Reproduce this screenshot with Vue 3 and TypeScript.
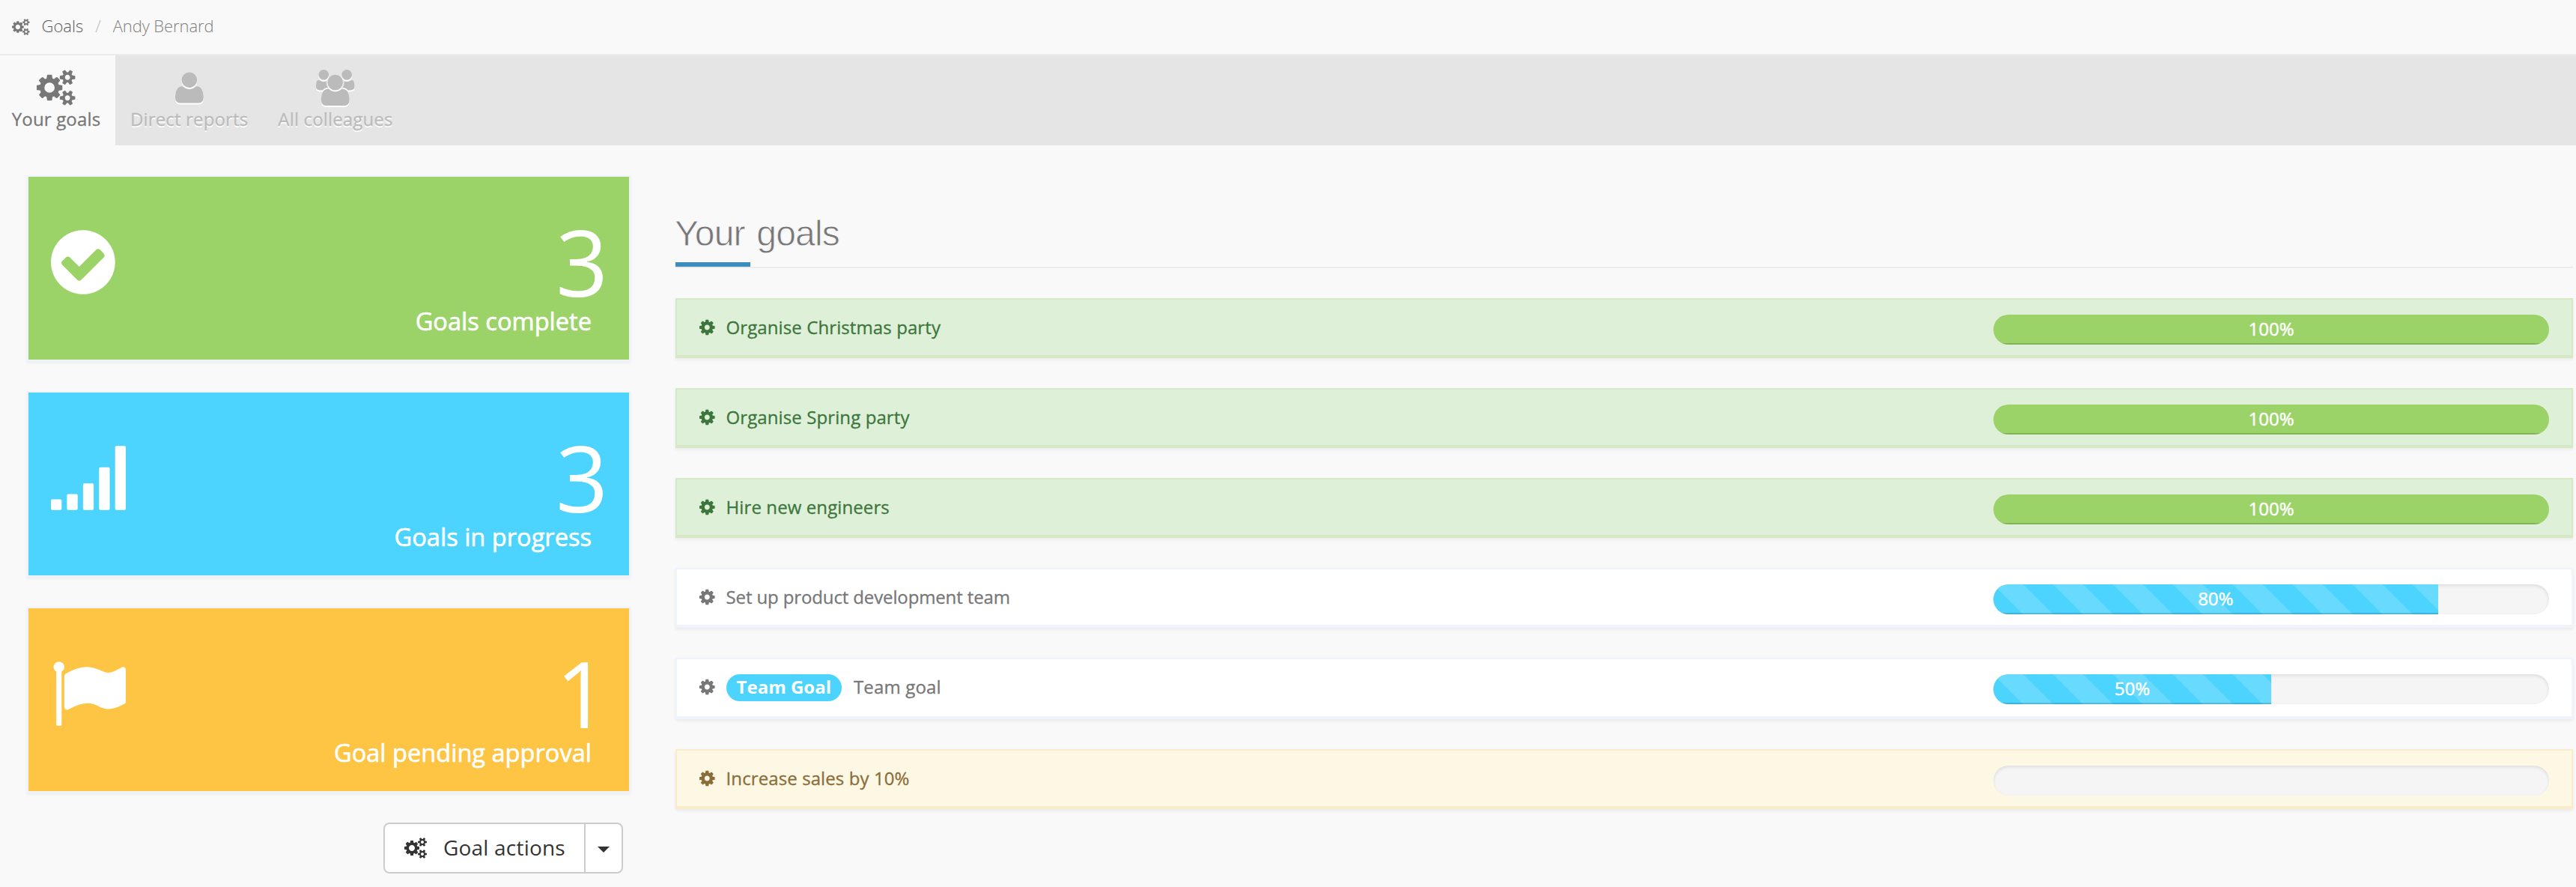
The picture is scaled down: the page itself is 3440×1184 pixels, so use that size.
<script setup lang="ts">
interface Tab {
  label: string
  icon: string
  active?: boolean
}
interface Card {
  count: number
  label: string
  tone: string
  icon: string
}
interface Goal {
  name: string
  tone: 'done' | 'open' | 'pending'
  progress: number
  badge?: string
}
interface Glyph {
  box: string
  width: number
  d: string
}

// All glyphs share an 1792-unit em; width is the advance in the same units.
const groupHead =
  'M1408 640q0 159-112.5 271.5t-271.5 112.5-271.5-112.5-112.5-271.5 112.5-271.5 271.5-112.5 271.5 112.5 112.5 271.5z'
const groupBody =
  'M1728 1533q0 120-73 189.5t-194 69.5h-874q-121 0-194-69.5t-73-189.5q0-53 3.5-103.5t14-109 26.5-108.5 43-97.5 62-81 85.5-53.5 111.5-20q10 0 43 21.5t73 48 107 48 135 21.5 135-21.5 107-48 73-48 43-21.5q61 0 111.5 20t85.5 53.5 62 81 43 97.5 26.5 108.5 14 109 3.5 103.5z'
const smallCog =
  'v140q0 16-149 31-12 27-30 52 51 113 51 138 0 4-4 7-122 71-124 71-8 0-46-47t-52-68q-20 2-30 2t-30-2q-14 21-52 68t-46 47q-2 0-124-71-4-3-4-7 0-25 51-138-18-25-30-52-149-15-149-31v-140q0-16 149-31 13-29 30-52-51-113-51-138 0-4 4-7 4-2 35-20t59-34 30-16q8 0 46 46.5t52 67.5q20-2 30-2t30 2q51-71 92-112l6-2q4 0 124 70 4 3 4 7 0 25-51 138 17 23 30 52 149 15 149 31z'

const glyphs: Record<string, Glyph> = {
  cog: {
    box: '128 0 1536 1792',
    width: 1536,
    d: 'M1152 896q0-106-75-181t-181-75-181 75-75 181 75 181 181 75 181-75 75-181zm512-109v222q0 12-8 23t-20 13l-185 28q-19 54-39 91 35 50 107 138 10 12 10 25t-9 23q-27 37-99 108t-94 71q-12 0-26-9l-138-108q-44 23-91 38-16 136-29 186-7 28-36 28h-222q-14 0-24.5-8.5t-11.5-21.5l-28-184q-49-16-90-37l-141 107q-10 9-25 9-14 0-25-11-126-114-165-168-7-10-7-23 0-12 8-23 15-21 51-66.5t54-70.5q-27-50-41-99l-183-27q-13-2-21-12.5t-8-23.5v-222q0-12 8-23t19-13l186-28q14-46 39-92-40-57-107-138-10-12-10-24 0-10 9-23 26-36 98.5-107.5t94.5-71.5q13 0 26 10l138 107q44-23 91-38 16-136 29-186 7-28 36-28h222q14 0 24.5 8.5t11.5 21.5l28 184q49 16 90 37l142-107q9-9 24-9 13 0 25 10 129 119 165 170 7 8 7 22 0 12-8 23-15 21-51 66.5t-54 70.5q26 50 41 98l183 28q13 2 21 12.5t8 23.5z',
  },
  cogs: {
    box: '-64 0 1920 1792',
    width: 1920,
    d:
      'M832 896q0-106-75-181t-181-75-181 75-75 181 75 181 181 75 181-75 75-181zm768 512q0-52-38-90t-90-38-90 38-38 90q0 53 37.5 90.5t90.5 37.5 90.5-37.5 37.5-90.5zm0-1024q0-52-38-90t-90-38-90 38-38 90q0 53 37.5 90.5t90.5 37.5 90.5-37.5 37.5-90.5zm-384 421v185q0 10-7 19.5t-16 10.5l-155 24q-11 35-32 76 34 48 90 115 7 11 7 20 0 12-7 19-23 30-82.5 89.5t-78.5 59.5q-11 0-21-7l-115-90q-37 19-77 31-11 108-23 155-7 24-30 24h-186q-11 0-20-7.5t-10-17.5l-23-153q-34-10-75-31l-118 89q-7 7-20 7-11 0-21-8-144-133-144-160 0-9 7-19 10-14 41-53t47-61q-23-44-35-82l-152-24q-10-1-17-9.5t-7-19.5v-185q0-10 7-19.5t16-10.5l155-24q11-35 32-76-34-48-90-115-7-11-7-20 0-12 7-20 22-30 82-89t79-59q11 0 21 7l115 90q34-18 77-32 11-108 23-154 7-24 30-24h186q11 0 20 7.5t10 17.5l23 153q34 10 75 31l118-89q8-7 20-7 11 0 21 8 144 133 144 160 0 8-7 19-12 16-42 54t-45 60q23 48 34 82l152 23q10 2 17 10.5t7 19.5z' +
      'M1856 1338' + smallCog + 'M1856 314' + smallCog,
  },
  user: { box: '320 128 1408 1792', width: 1408, d: groupHead + groupBody },
  users: {
    box: '64 0 1920 1792',
    width: 1920,
    d:
      'M657 896q-162 5-265 128h-134q-82 0-138-40.5t-56-118.5q0-353 124-353 6 0 43.5 21t97.5 42.5 119 21.5q67 0 133-23-5 37-5 66 0 139 81 256z' +
      'M704 256q0 106-75 181t-181 75-181-75-75-181 75-181 181-75 181 75 75 181z' +
      'M1984 865q0 78-56 118.5t-138 40.5h-134q-103-123-265-128 81-117 81-256 0-29-5-66 66 23 133 23 59 0 119-21.5t97.5-42.5 43.5-21q124 0 124 353z' +
      'M1856 256q0 106-75 181t-181 75-181-75-75-181 75-181 181-75 181 75 75 181z' +
      groupHead + groupBody,
  },
  check: {
    box: '128 0 1536 1792',
    width: 1536,
    d: 'M1412 734q0-28-18-46l-91-90q-19-19-45-19t-45 19l-408 407-226-226q-19-19-45-19t-45 19l-91 90q-18 18-18 46 0 27 18 45l362 362q19 19 45 19 27 0 46-19l543-543q18-18 18-45zm252 162q0 209-103 385.5t-279.5 279.5-385.5 103-385.5-103-279.5-279.5-103-385.5 103-385.5 279.5-279.5 385.5-103 385.5 103 279.5 279.5 103 385.5z',
  },
  signal: {
    box: '0 0 1792 1792',
    width: 1792,
    d: [256, 384, 640, 1024, 1536]
      .map((h, i) => `M${i * 384 + 32} 1664q-32 0-32-32v-${h - 64}q0-32 32-32h192q32 0 32 32v${h - 64}q0 32-32 32z`)
      .join(''),
  },
  flag: {
    box: '-64 0 1792 1792',
    width: 1792,
    d: 'M256 256q0 72-64 110v1266q0 13-9.5 22.5t-22.5 9.5h-64q-13 0-22.5-9.5t-9.5-22.5v-1266q-64-38-64-110 0-53 37.5-90.5t90.5-37.5 90.5 37.5 37.5 90.5zm1472 64v763q0 25-12.5 38.5t-39.5 27.5q-215 116-369 116-61 0-123.5-22t-108.5-48-115.5-48-142.5-22q-192 0-464 146-17 9-33 9-26 0-45-19t-19-45v-742q0-32 31-55 21-14 79-43 236-120 421-120 107 0 200 29t219 88q38 19 88 19 54 0 117.5-21t110-47 88-47 54.5-21q26 0 45 19t19 45z',
  },
}

const tabs: Tab[] = [
  { label: 'Your goals', icon: 'cogs', active: true },
  { label: 'Direct reports', icon: 'user' },
  { label: 'All colleagues', icon: 'users' },
]
const cards: Card[] = [
  { count: 3, label: 'Goals complete', tone: 'green', icon: 'check' },
  { count: 3, label: 'Goals in progress', tone: 'blue', icon: 'signal' },
  { count: 1, label: 'Goal pending approval', tone: 'amber', icon: 'flag' },
]
const goals: Goal[] = [
  { name: 'Organise Christmas party', tone: 'done', progress: 100 },
  { name: 'Organise Spring party', tone: 'done', progress: 100 },
  { name: 'Hire new engineers', tone: 'done', progress: 100 },
  { name: 'Set up product development team', tone: 'open', progress: 80 },
  { name: 'Team goal', tone: 'open', progress: 50, badge: 'Team Goal' },
  { name: 'Increase sales by 10%', tone: 'pending', progress: 0 },
]
</script>

<template>
  <div class="page">
    <nav class="crumbs">
      <svg class="icon crumb-icon" :viewBox="glyphs.cogs.box"><path :d="glyphs.cogs.d" /></svg>
      <a class="crumb-link">Goals</a>
      <span class="crumb-sep">/</span>
      <span class="crumb-here">Andy Bernard</span>
    </nav>

    <div class="tabs">
      <a v-for="tab in tabs" :key="tab.label" class="tab" :class="{ active: tab.active }">
        <svg class="icon tab-icon" :viewBox="glyphs[tab.icon].box"><path :d="glyphs[tab.icon].d" /></svg>
        <span class="tab-label">{{ tab.label }}</span>
      </a>
    </div>

    <div class="content">
      <aside class="side">
        <div v-for="card in cards" :key="card.label" class="card" :class="card.tone">
          <svg class="icon card-icon" :viewBox="glyphs[card.icon].box"><path :d="glyphs[card.icon].d" /></svg>
          <div class="card-text">
            <div class="card-count">{{ card.count }}</div>
            <div class="card-label">{{ card.label }}</div>
          </div>
        </div>
        <div class="actions">
          <button class="btn btn-main">
            <svg class="icon btn-icon" :viewBox="glyphs.cogs.box"><path :d="glyphs.cogs.d" /></svg>
            <span class="btn-text">Goal actions</span>
          </button>
          <button class="btn btn-caret"><span class="caret"></span></button>
        </div>
      </aside>

      <main class="main">
        <header class="title">
          <h1>Your goals</h1>
          <div class="accent"></div>
        </header>
        <div v-for="goal in goals" :key="goal.name" class="goal" :class="[goal.tone, { tall: goal.badge }]">
          <svg class="icon goal-icon" :viewBox="glyphs.cog.box"><path :d="glyphs.cog.d" /></svg>
          <span v-if="goal.badge" class="badge">{{ goal.badge }}</span>
          <span class="goal-name">{{ goal.name }}</span>
          <div class="track">
            <div v-if="goal.progress" class="fill" :style="{ width: goal.progress + '%' }">{{ goal.progress }}%</div>
          </div>
        </div>
      </main>
    </div>
  </div>
</template>

<style>
body {
  margin: 0;
  background: #f9f9f9;
}
</style>

<style scoped>
.page {
  height: 1184px;
  overflow: hidden;
  background: #f9f9f9;
  color: #777;
  font-family: "Open Sans", "Noto Sans", sans-serif;
  font-size: 24px;
}
.icon {
  display: block;
  flex: none;
  width: auto;
  fill: currentColor;
}

.crumbs {
  box-sizing: border-box;
  display: flex;
  height: 74px;
  padding-left: 16px;
  border-bottom: 2px solid #ebebeb;
  font-size: 22px;
  font-weight: 300;
  line-height: 69px;
}
.crumb-icon {
  height: 22px;
  margin: 25px 16px 0 0;
}
.crumb-link {
  color: #5c5c5c;
}
.crumb-sep {
  margin: 0 16px;
  color: #bbb;
}
.crumb-here {
  color: #808080;
  letter-spacing: -0.1px;
}

.tabs {
  display: flex;
  height: 120px;
  background: #e5e5e5;
}
.tab {
  display: flex;
  flex-direction: column;
  align-items: center;
  box-sizing: border-box;
  padding: 19px 20px 0;
  color: #bbb;
}
.tab.active {
  width: 154px;
  padding-left: 16px;
  background: #f9f9f9;
  color: #777;
}
.tab-icon {
  height: 48px;
  overflow: visible;
  filter: drop-shadow(0 2px 0 #fff);
}
.tab-label {
  line-height: 35px;
  letter-spacing: 0.15px;
  text-shadow: 0 2px 0 #fff;
  white-space: nowrap;
  -webkit-text-stroke: 0.3px currentColor;
}

.content {
  display: flex;
  gap: 60px;
  padding: 40px 4px 0 36px;
}
.side {
  flex: none;
  display: flex;
  flex-direction: column;
  gap: 40px;
  width: 806px;
}
.card {
  box-sizing: border-box;
  display: flex;
  justify-content: space-between;
  height: 248px;
  padding: 0 28px 0 30px;
  border: 2px solid #eff4fc;
  box-shadow: 0 2px 4px rgba(0, 0, 0, 0.06);
  color: #fff;
}
.green {
  background: #9bd369;
}
.blue {
  background: #4cd4fe;
}
.amber {
  background: #fec545;
}
.card-icon {
  height: 100px;
  margin-top: 64px;
}
.card-text {
  padding-top: 55px;
  text-align: right;
}
.card-count {
  font-size: 122px;
  line-height: 117px;
}
.card-label {
  margin-right: 22px;
  font-size: 32.6px;
  line-height: 42px;
  -webkit-text-stroke: 0.6px currentColor;
}
.actions {
  display: flex;
  justify-content: flex-end;
  margin-right: 10px;
}
.btn {
  box-sizing: border-box;
  display: flex;
  align-items: center;
  height: 68px;
  margin: 0;
  border: 2px solid #ccc;
  background: #fff;
  color: #333;
  font: 28px "Open Sans", "Noto Sans", sans-serif;
  letter-spacing: 0.2px;
}
.btn-main {
  width: 270px;
  padding: 0 0 0 26px;
  border-radius: 8px 0 0 8px;
}
.btn-icon {
  height: 28px;
  margin-right: 22px;
}
.btn-text {
  padding-bottom: 2px;
}
.btn-caret {
  justify-content: center;
  width: 52px;
  margin-left: -2px;
  padding: 0;
  border-radius: 0 8px 8px 0;
}
.caret {
  margin-top: 4px;
  border: 8px solid transparent;
  border-top-color: #333;
  border-bottom: 0;
}

.main {
  flex: 1;
  display: flex;
  flex-direction: column;
  gap: 40px;
  padding-top: 39px;
}
.title {
  border-bottom: 2px solid #ebebeb;
}
h1 {
  margin: 0 0 0 -1px;
  font: 400 48px/77px "Liberation Sans", Arial, sans-serif;
  letter-spacing: -0.8px;
  word-spacing: 3px;
  -webkit-text-stroke: 0.8px #f9f9f9;
}
.accent {
  width: 100px;
  height: 6px;
  background: #3c8dbc;
}
.goal {
  box-sizing: border-box;
  display: flex;
  height: 80px;
  padding: 0 30px;
  border: 2px solid;
  border-bottom-width: 4px;
  box-shadow: 0 2px 4px rgba(0, 0, 0, 0.07);
}
.goal.tall {
  height: 82px;
}
.done {
  border-color: #d6e9c6;
  background: #dff0d8;
  color: #3c763d;
}
.open {
  border-color: #eff4fc;
  background: #fff;
}
.pending {
  border-color: #faebcc;
  background: #fcf8e3;
  color: #8a6d3b;
}
.goal-icon {
  height: 24px;
  margin: 25px 15px 0 0;
}
.badge {
  height: 36px;
  margin: 20px 16px 0 0;
  padding: 0 14px;
  border-radius: 18px;
  background: #4cd4fe;
  color: #fff;
  font-weight: 700;
  line-height: 33px;
}
.goal-name {
  flex: 1;
  padding-top: 18px;
  letter-spacing: 0.1px;
  line-height: 37px;
  -webkit-text-stroke: 0.3px currentColor;
}
.open .goal-name {
  letter-spacing: -0.13px;
}
.open.tall .goal-name {
  letter-spacing: 0.15px;
}
.track {
  width: 742px;
  height: 40px;
  margin-top: 20px;
  overflow: hidden;
  border-radius: 20px;
  background: #f5f5f5;
  box-shadow: inset 0 2px 4px rgba(0, 0, 0, 0.1);
}
.fill {
  height: 40px;
  background-color: #9bd369;
  box-shadow: inset 0 -2px 0 rgba(0, 0, 0, 0.15);
  color: #fff;
  line-height: 38px;
  text-align: center;
  -webkit-text-stroke: 0.5px currentColor;
}
.open .fill {
  background-color: #4cd4fe;
  background-image: linear-gradient(
    45deg,
    rgba(255, 255, 255, 0.15) 25%,
    transparent 25%,
    transparent 50%,
    rgba(255, 255, 255, 0.15) 50%,
    rgba(255, 255, 255, 0.15) 75%,
    transparent 75%
  );
  background-size: 80px 80px;
}
</style>
